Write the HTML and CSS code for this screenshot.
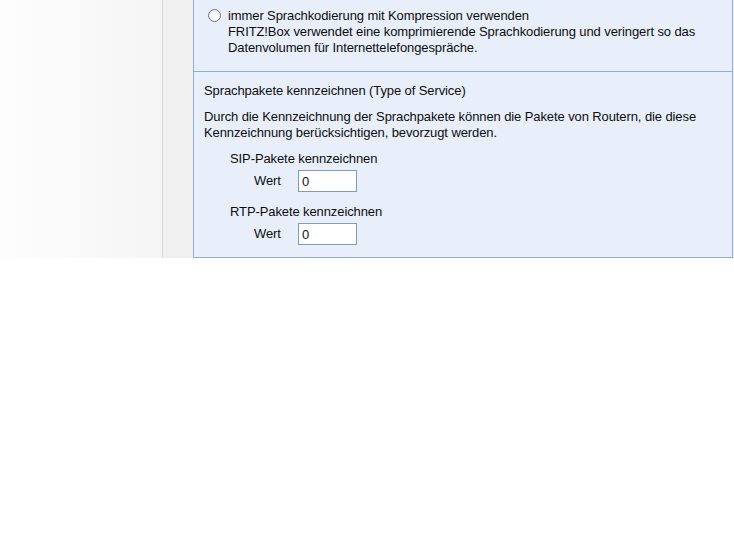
FILE: index.html
```html
<!DOCTYPE html>
<html lang="de">
<head>
  <meta charset="UTF-8" />
  <meta name="viewport" content="width=device-width, initial-scale=1.0"/>
  <title>Telefonie - Sprachübertragung</title>
  <link rel="stylesheet" href="styles.css">
</head>
<body>
  <div class="page">
    <div class="nav"></div>
    <div class="main">
      <div class="box">
        <div class="section codec">
          <div class="option">
            <span class="radio"></span>
            <div class="option-text">
              <div>immer Sprachkodierung mit Kompression verwenden</div>
              <div>FRITZ!Box verwendet eine komprimierende Sprachkodierung und veringert so das Datenvolumen für Internettelefongespräche.</div>
            </div>
          </div>
        </div>

        <div class="section tos">
          <p class="title">Sprachpakete kennzeichnen (Type of Service)</p>
          <p class="desc">Durch die Kennzeichnung der Sprachpakete können die Pakete von Routern, die diese Kennzeichnung berücksichtigen, bevorzugt werden.</p>

          <div class="mark">
            <div class="mark-label">SIP-Pakete kennzeichnen</div>
            <div class="field">
              <label for="sipTos">Wert</label>
              <input type="text" id="sipTos" value="0" />
            </div>
          </div>

          <div class="mark">
            <div class="mark-label">RTP-Pakete kennzeichnen</div>
            <div class="field">
              <label for="rtpTos">Wert</label>
              <input type="text" id="rtpTos" value="0" />
            </div>
          </div>
        </div>
      </div>
    </div>
  </div>
</body>
</html>
```

FILE: styles.css
```css
body {
  font-family: Arial, "Liberation Sans", sans-serif;
  font-size: 13px;
  line-height: 16px;
  letter-spacing: -0.1px;
  color: #0d0d0d;
  background: #fff;
  margin: 0;
}

.page {
  display: flex;
}

.nav {
  width: 162px;
  background: linear-gradient(to right, #fdfdfd, #f5f5f5);
  border-right: 1px solid #d9d9d9;
}

.main {
  flex: 1;
  background: #f0f0f0;
  padding: 0 1px 0 30px;
}

.box {
  background: #e8effb;
  border: 1px solid #8eafdc;
  border-top: none;
}

.section {
  padding: 8px 10px 15px;
}

.section + .section {
  border-top: 1px solid #8eafdc;
}

.option {
  display: flex;
  align-items: flex-start;
  padding-left: 4px;
}

.radio {
  width: 11px;
  height: 11px;
  margin: 1px 7px 0 0;
  border: 1px solid #6b7a8c;
  border-radius: 50%;
  background: radial-gradient(circle at 50% 65%, #ffffff 30%, #dde1e6 100%);
  flex-shrink: 0;
}

.option-text {
  width: 480px;
}

.tos {
  padding: 11px 10px 12px;
}

.tos p {
  margin: 0;
}

.desc {
  margin-top: 10px !important;
  width: 510px;
}

.mark {
  margin-top: 10px;
  padding-left: 26px;
}

.mark + .mark {
  margin-top: 12px;
}

.field {
  display: flex;
  align-items: center;
  margin-top: 3px;
  padding-left: 24px;
}

.field label {
  width: 44px;
}

.field input {
  width: 51px;
  height: 18px;
  padding: 1px 3px;
  border: 1px solid #7f9db9;
  background: #fff;
  font-family: inherit;
  font-size: 13px;
  color: #111;
  margin: 0;
  box-sizing: content-box;
}
```
